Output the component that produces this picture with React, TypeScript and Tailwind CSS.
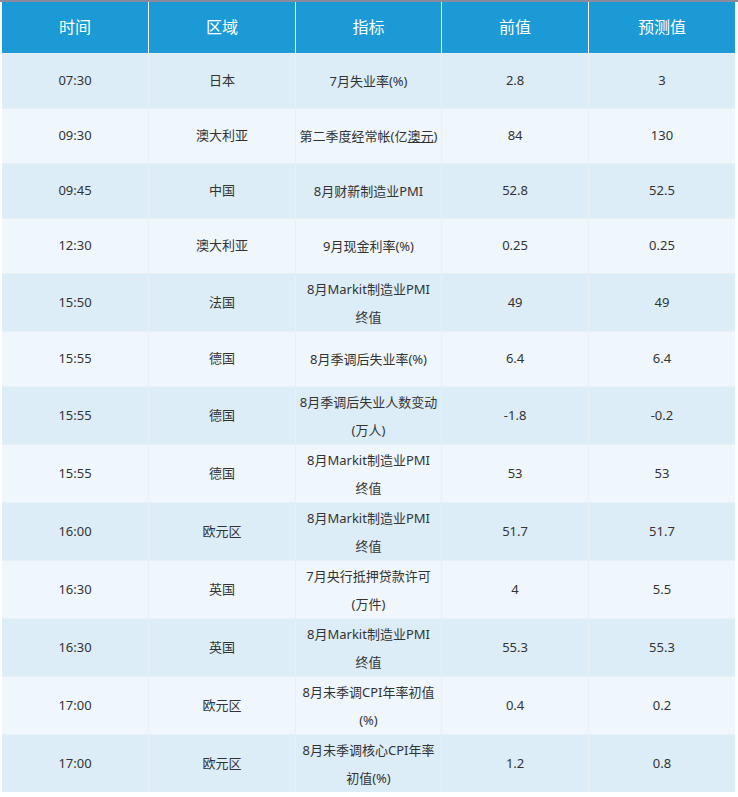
import React from 'react'

type Row = {
  time: string
  region: string
  indicator: React.ReactNode[]
  prev: string
  forecast: string
}

const rows: Row[] = [
  { time: '07:30', region: '日本', indicator: ['7月失业率(%)'], prev: '2.8', forecast: '3' },
  {
    time: '09:30',
    region: '澳大利亚',
    indicator: [
      <>
        第二季度经常帐(亿<span className="underline">澳元</span>)
      </>,
    ],
    prev: '84',
    forecast: '130',
  },
  { time: '09:45', region: '中国', indicator: ['8月财新制造业PMI'], prev: '52.8', forecast: '52.5' },
  { time: '12:30', region: '澳大利亚', indicator: ['9月现金利率(%)'], prev: '0.25', forecast: '0.25' },
  { time: '15:50', region: '法国', indicator: ['8月Markit制造业PMI', '终值'], prev: '49', forecast: '49' },
  { time: '15:55', region: '德国', indicator: ['8月季调后失业率(%)'], prev: '6.4', forecast: '6.4' },
  { time: '15:55', region: '德国', indicator: ['8月季调后失业人数变动', '(万人)'], prev: '-1.8', forecast: '-0.2' },
  { time: '15:55', region: '德国', indicator: ['8月Markit制造业PMI', '终值'], prev: '53', forecast: '53' },
  { time: '16:00', region: '欧元区', indicator: ['8月Markit制造业PMI', '终值'], prev: '51.7', forecast: '51.7' },
  { time: '16:30', region: '英国', indicator: ['7月央行抵押贷款许可', '(万件)'], prev: '4', forecast: '5.5' },
  { time: '16:30', region: '英国', indicator: ['8月Markit制造业PMI', '终值'], prev: '55.3', forecast: '55.3' },
  { time: '17:00', region: '欧元区', indicator: ['8月未季调CPI年率初值', '(%)'], prev: '0.4', forecast: '0.2' },
  { time: '17:00', region: '欧元区', indicator: ['8月未季调核心CPI年率', '初值(%)'], prev: '1.2', forecast: '0.8' },
]

const headers = ['时间', '区域', '指标', '前值', '预测值']

export default function App() {
  return (
    <div
      className="w-[738px] min-h-[797px] bg-white"
      style={{ fontFamily: '"Noto Sans", "Noto Sans CJK SC", sans-serif' }}
    >
      <div className="h-[2px] bg-[#8c8a9e]" />
      <table className="ml-[2px] w-[733px] table-fixed border-collapse text-center">
        <thead>
          <tr className="bg-[#1b9ad6] text-white">
            {headers.map((h, i) => (
              <th
                key={h}
                className={`h-[51px] p-0 text-[16px] font-normal ${i > 0 ? 'border-l border-white' : ''}`}
              >
                {h}
              </th>
            ))}
          </tr>
        </thead>
        <tbody className="text-[13px] text-[#333]">
          {rows.map((r, i) => (
            <tr key={i} className={i % 2 === 0 ? 'bg-[#dcedf8]' : 'bg-[#eff7fd]'}>
              <td className="h-[55px] border-t border-[#e8f0f6] p-0 pt-px">{r.time}</td>
              <td className="border-l border-t border-[#e8f0f6] p-0 pt-px">{r.region}</td>
              <td className="border-l border-t border-[#e8f0f6] px-0 pt-px pb-0 leading-[28px]">
                {r.indicator.map((line, j) => (
                  <div key={j} className="whitespace-nowrap">
                    {line}
                  </div>
                ))}
              </td>
              <td className="border-l border-t border-[#e8f0f6] p-0 pt-px">{r.prev}</td>
              <td className="border-l border-t border-[#e8f0f6] p-0 pt-px">{r.forecast}</td>
            </tr>
          ))}
        </tbody>
      </table>
    </div>
  )
}
